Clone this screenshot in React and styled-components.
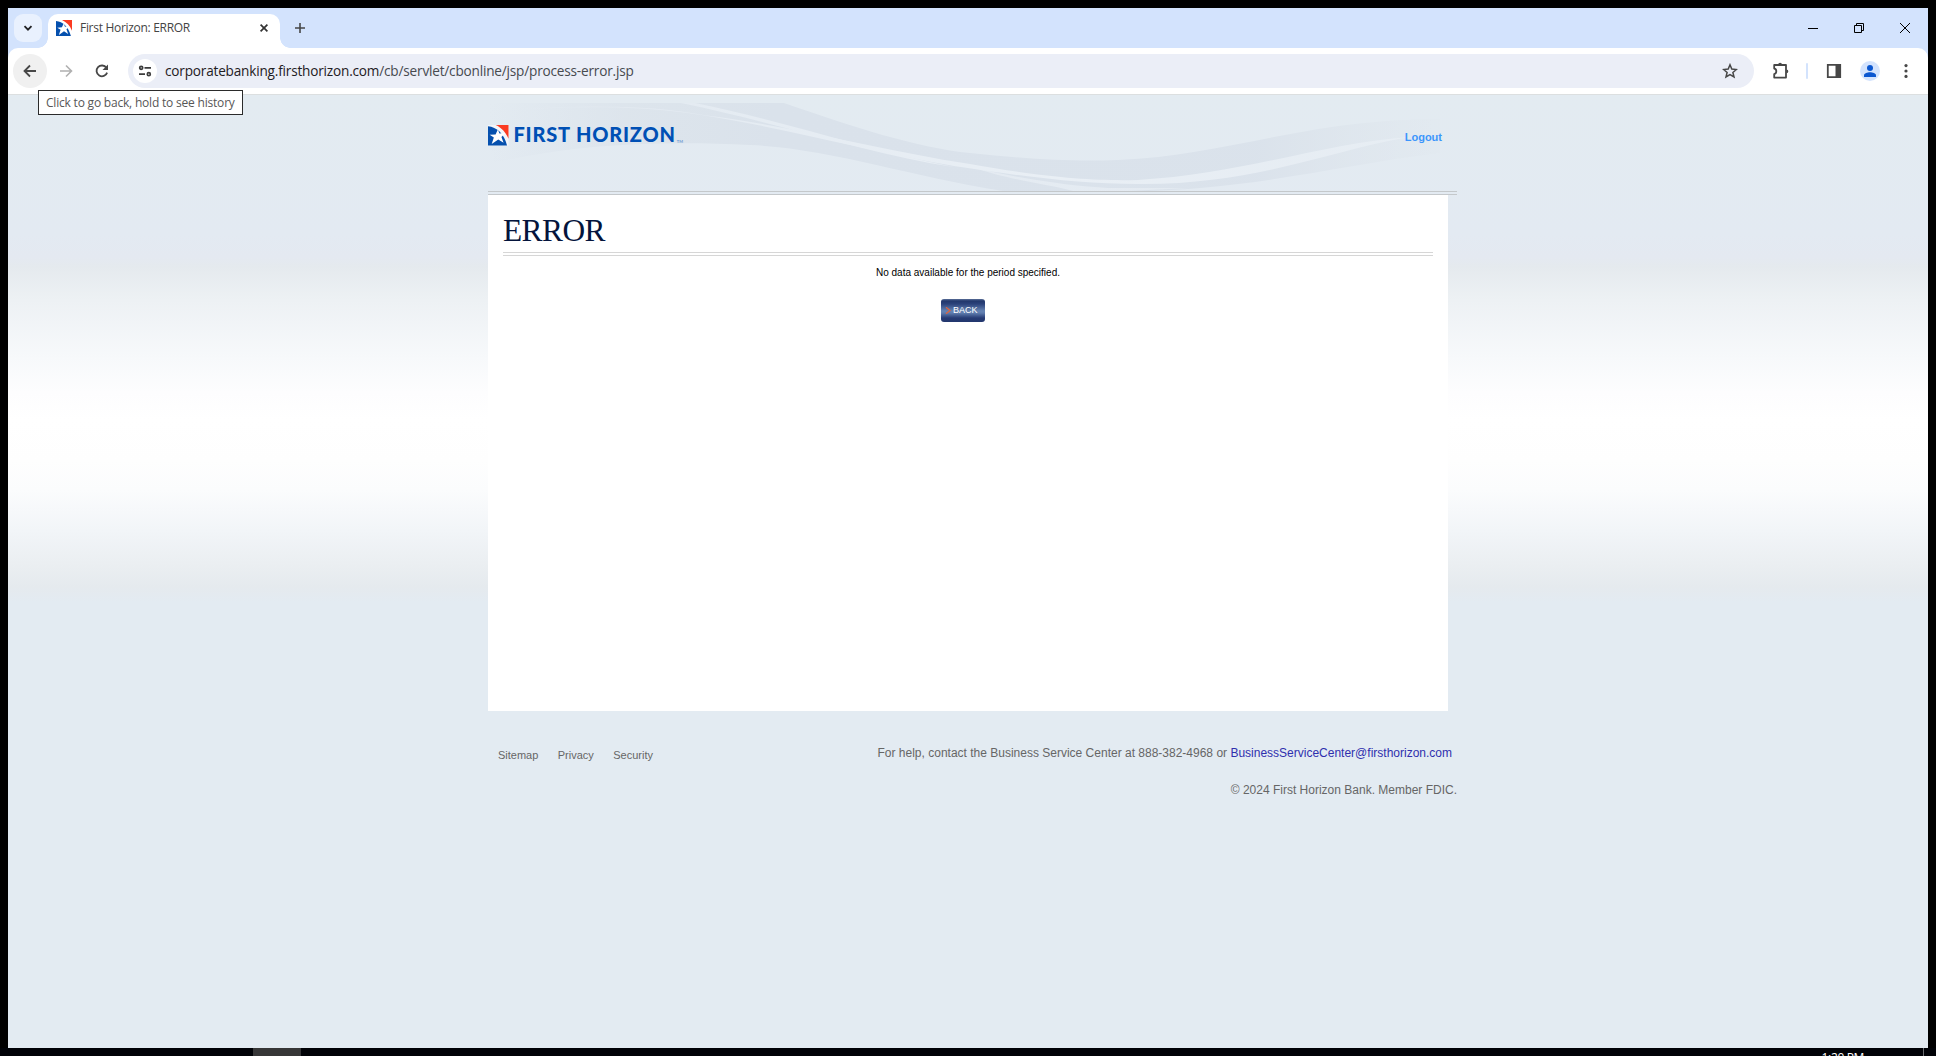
import React from "react";
import styled, { createGlobalStyle } from "styled-components";

const GlobalStyle = createGlobalStyle`
  * { box-sizing: border-box; }
  html, body { margin: 0; padding: 0; background: #000; }
  body { width: 1936px; height: 1056px; overflow: hidden; font-family: "Liberation Sans", Arial, sans-serif; }
  a { text-decoration: none; color: inherit; }
  svg { display: block; flex: none; }
`;

const uiFont = `"Open Sans", "Noto Sans", sans-serif`;

const Screen = styled.div`
  display: flex;
  flex-direction: column;
  width: 1936px;
  height: 1056px;
  padding: 8px 8px 0;
  background: #000;
  overflow: hidden;
`;

const Window = styled.div`
  display: flex;
  flex-direction: column;
  width: 1920px;
  height: 1040px;
  flex: none;
  background: #d3e3fd;
`;

const TabStrip = styled.div`
  display: flex;
  align-items: flex-start;
  height: 40px;
  padding: 6px 0 0 6px;
`;

const TabSearch = styled.button`
  display: flex;
  align-items: center;
  justify-content: center;
  width: 28px;
  height: 28px;
  padding: 0;
  border: 0;
  border-radius: 9px;
  background: #e9f1fe;
`;

const Tab = styled.div`
  position: relative;
  display: flex;
  align-items: center;
  width: 232px;
  height: 34px;
  margin-left: 6px;
  padding: 0 10px 6px 8px;
  border-radius: 10px 10px 0 0;
  background: #fff;
  &::before, &::after {
    content: "";
    position: absolute;
    bottom: 0;
    width: 10px;
    height: 10px;
  }
  &::before {
    left: -10px;
    background: radial-gradient(circle at 0 0, transparent 9.5px, #fff 10px);
  }
  &::after {
    right: -10px;
    background: radial-gradient(circle at 100% 0, transparent 9.5px, #fff 10px);
  }
`;

const TabTitle = styled.span`
  flex: 1;
  margin-left: 8px;
  font: 12px/16px ${uiFont};
  letter-spacing: -0.3px;
  color: #444;
  white-space: nowrap;
`;

const NewTab = styled.div`
  display: flex;
  align-items: center;
  justify-content: center;
  width: 28px;
  height: 28px;
  margin-left: 6px;
`;

const WindowControls = styled.div`
  display: flex;
  margin-left: auto;
`;

const WindowButton = styled.div`
  display: flex;
  align-items: center;
  justify-content: center;
  width: 46px;
  height: 28px;
`;

const Toolbar = styled.div`
  display: flex;
  align-items: center;
  height: 47px;
  flex: none;
  padding: 0 4px 1px 5px;
  border-bottom: 1px solid #dcdfe0;
  border-radius: 10px 10px 0 0;
  background: #fff;
`;

const NavButton = styled.div`
  position: relative;
  display: flex;
  align-items: center;
  justify-content: center;
  width: 34px;
  height: 34px;
  margin-right: 2px;
  border-radius: 50%;
  background: ${(p) => (p.$active ? "#f0f0f0" : "transparent")};
`;

const Tooltip = styled.div`
  position: absolute;
  z-index: 2;
  left: 25px;
  top: 36px;
  width: 205px;
  height: 25px;
  padding-left: 7px;
  border: 1px solid #2b2b2b;
  background: #fff;
  color: #575757;
  font: 12px/23px ${uiFont};
  letter-spacing: -0.2px;
  white-space: nowrap;
`;

const Omnibox = styled.div`
  display: flex;
  align-items: center;
  flex: 1;
  height: 34px;
  margin: 0 8px 0 7px;
  padding: 0 16px 0 5px;
  border-radius: 17px;
  background: #ebeef7;
`;

const SiteChip = styled.div`
  display: flex;
  align-items: center;
  justify-content: center;
  width: 24px;
  height: 24px;
  border-radius: 50%;
  background: #fff;
`;

const Url = styled.div`
  flex: 1;
  margin-left: 8px;
  font: 13.6px/20px ${uiFont};
  letter-spacing: -0.19px;
  color: #474a4f;
  white-space: nowrap;
`;

const Host = styled.span`
  color: #1f2023;
`;

const ToolbarItem = styled.div`
  display: flex;
  align-items: center;
  justify-content: center;
  width: 36px;
  height: 34px;
`;

const Separator = styled.div`
  width: 2px;
  height: 16px;
  margin: 0 8px;
  border-radius: 1px;
  background: #d3e3fd;
`;

const Avatar = styled.div`
  display: flex;
  align-items: center;
  justify-content: center;
  width: 20px;
  height: 20px;
  border-radius: 50%;
  background: #d3e3fd;
`;

const Page = styled.div`
  flex: 1;
  padding-left: 480px;
  background: linear-gradient(
    #e3ebf1 0, #e3eaf2 140px, #e4e9f1 162px, #e5eaee 172px, #edf1f4 205px,
    #f7f9fb 263px, #fdfdfe 297px, #fff 325px, #fefefe 365px, #fbfcfd 395px,
    #f2f5f8 435px, #eaeef1 472px, #e5eaee 492px, #e3ebf2 507px, #e3ebf2 100%
  );
`;

const Header = styled.header`
  position: relative;
  display: flex;
  justify-content: space-between;
  width: 969px;
  height: 100px;
  padding: 30px 15px 0 0;
  border-bottom: 4px double #c4c8cb;
`;

const Waves = styled.svg`
  position: absolute;
  left: 0;
  top: 8px;
`;

const Brand = styled.div`
  position: relative;
  display: flex;
  height: 20px;
`;

const BrandName = styled.span`
  margin-left: 5px;
  font: 900 20px/19px Lato, sans-serif;
  letter-spacing: 0.8px;
  color: #0050b5;
  white-space: nowrap;
`;

const Mark = styled.span`
  align-self: flex-end;
  margin: 0 0 1px 1px;
  font: 700 4px/5px Lato, sans-serif;
  color: #6f9bd2;
`;

const Logout = styled.a`
  position: relative;
  margin-top: 6px;
  font: bold 11px/13px "Liberation Sans", Arial, sans-serif;
  color: #3c96fc;
`;

const Panel = styled.main`
  width: 960px;
  height: 516px;
  padding: 0 15px;
  background: #fff;
`;

const Title = styled.h1`
  margin: 0;
  height: 61px;
  padding-top: 18px;
  border-bottom: 4px double #d6d6d6;
  font: 400 31.4px/36px "Liberation Serif", serif;
  letter-spacing: -0.55px;
  color: #04143c;
`;

const Message = styled.p`
  margin: 11px 0 20px;
  font: 10px/12px "Liberation Sans", Arial, sans-serif;
  text-align: center;
  color: #000;
`;

const Actions = styled.div`
  display: flex;
  justify-content: center;
  padding-right: 10px;
`;

const BackButton = styled.button`
  display: flex;
  align-items: center;
  gap: 1px;
  width: 44px;
  height: 23px;
  padding: 0 0 0 4px;
  border: 0;
  border-radius: 3px;
  background: linear-gradient(#5b7099 0, #22376c 2px, #2b427a 5px, #6684b4 12px, #5f7cae 14px, #263b74 19px, #22366d 23px);
  font: 9px/23px "Liberation Sans", Arial, sans-serif;
  color: #fff;
`;

const Footer = styled.footer`
  display: flex;
  justify-content: space-between;
  width: 969px;
  padding: 35px 0 0 10px;
  color: #666;
`;

const FooterLinks = styled.nav`
  display: flex;
  gap: 19.4px;
  padding-top: 3px;
  font-size: 11px;
  line-height: 13px;
`;

const Contact = styled.div`
  display: flex;
  flex-direction: column;
  align-items: flex-end;
  gap: 23px;
  font-size: 12px;
  line-height: 14px;
`;

const HelpLine = styled.div`
  padding-right: 5px;
`;

const MailLink = styled.a`
  && { color: #2f2fae; }
`;

const Taskbar = styled.div`
  display: flex;
  height: 8px;
  flex: none;
  margin: 0 -8px;
  background: #000207;
  overflow: hidden;
`;

const RunningApp = styled.div`
  width: 48px;
  height: 8px;
  margin-left: 253px;
  background: #363637;
`;

const Clock = styled.div`
  height: 8px;
  margin: 4px 59px 0 auto;
  font: 12px/12px ${uiFont};
  letter-spacing: -0.35px;
  color: #fff;
  white-space: nowrap;
`;

const DesktopEdge = styled.div`
  width: 1px;
  margin-right: 12px;
  background: #6a6c70;
`;

const Emblem = ({ size, light }) => (
  <svg width={size} height={size} viewBox="0 0 20 20">
    <rect width="20" height="20" fill={light} />
    <path d="M0 1.2C8.5 2 15.5 8 18.6 20H0Z" fill="#0550ae" />
    <path d="M7.5 0H20V13.5C17.6 7.4 13.3 2.6 7.5 0Z" fill="#fb3b22" />
    <path d="M9.6 4.4L11.2 8.4L17 7.8L13.1 11.6L15.2 17.4L10 14.2L3.6 18.6L5.7 12.3L1.6 9.6L7.4 9.2Z" fill="#fff" />
  </svg>
);

const WaveArt = () => (
  <Waves width="960" height="88" viewBox="0 0 960 88">
    <defs>
      <linearGradient id="fade" x1="0" x2="960" y1="0" y2="0" gradientUnits="userSpaceOnUse">
        <stop offset="0" stopColor="#d9e1eb" stopOpacity="0" />
        <stop offset="0.15" stopColor="#dae2ea" stopOpacity="0.7" />
        <stop offset="0.3" stopColor="#dae2eb" />
        <stop offset="0.8" stopColor="#dae2eb" stopOpacity="0.95" />
        <stop offset="1" stopColor="#dde4eb" stopOpacity="0.1" />
      </linearGradient>
      <linearGradient id="streak" x1="0" x2="960" y1="0" y2="0" gradientUnits="userSpaceOnUse">
        <stop offset="0" stopColor="#e5ebf2" stopOpacity="0" />
        <stop offset="0.2" stopColor="#e4ebf2" />
        <stop offset="0.6" stopColor="#e9eff5" />
        <stop offset="1" stopColor="#e9eff5" stopOpacity="0.7" />
      </linearGradient>
    </defs>
    <path d="M0 0H296C365 24 430 45 482 50C540 56 585 59 630 57C740 52 820 16 952 16V50C850 62 760 88 640 88H515C420 73 340 45 262 42C180 38 90 40 5 60Z" fill="url(#fade)" />
    <g fill="url(#streak)">
      <path d="M207 0C300 19 375 46 466 64C380 51 295 21 193 0Z" />
      <path d="M0 8C100 1 160 2 215 12C310 24 390 47 482 61C560 75 605 78 650 77C755 71 840 39 922 34C845 46 770 82 650 81C590 81 540 74 466 63C370 46 280 21 200 10C130 1 60 4 0 9Z" />
      <path d="M485 64C535 77 585 83 620 85L700 85L640 88L585 88C560 81 515 76 485 64Z" opacity="0.7" />
    </g>
  </Waves>
);

const Stroke = ({ size = 16, color = "#474747", width = 1.8, children }) => (
  <svg width={size} height={size} viewBox={`0 0 ${size} ${size}`} fill="none" stroke={color} strokeWidth={width}>
    {children}
  </svg>
);

const Browser = () => (
  <>
    <TabStrip>
      <TabSearch aria-label="Search tabs">
        <Stroke size={10} color="#202124"><path d="M1.5 3.2L5 6.7L8.5 3.2" /></Stroke>
      </TabSearch>
      <Tab>
        <Emblem size={16} light="#fff" />
        <TabTitle>First Horizon: ERROR</TabTitle>
        <Stroke size={12} color="#333" width={1.7}><path d="M2.6 2.6L9.4 9.4M9.4 2.6L2.6 9.4" /></Stroke>
      </Tab>
      <NewTab>
        <Stroke size={12} width={1.6}><path d="M6 1V11M1 6H11" /></Stroke>
      </NewTab>
      <WindowControls>
        <WindowButton>
          <Stroke size={10} color="#000" width={1}><path d="M0 5.5H10" /></Stroke>
        </WindowButton>
        <WindowButton>
          <Stroke size={10} color="#000" width={1}>
            <path d="M.5 2.5H7.5V9.5H.5ZM2.5 2.5V.5H9.5V7.5H7.5" />
          </Stroke>
        </WindowButton>
        <WindowButton>
          <Stroke size={10} color="#000" width={1}><path d="M0 0L10 10M10 0L0 10" /></Stroke>
        </WindowButton>
      </WindowControls>
    </TabStrip>
    <Toolbar>
      <NavButton $active>
        <Stroke><path d="M14 8H3M8 2.5L2.5 8L8 13.5" /></Stroke>
        <Tooltip>Click to go back, hold to see history</Tooltip>
      </NavButton>
      <NavButton>
        <Stroke color="#b0b0b0" width={1.6}><path d="M2 8H13M8 2.5L13.5 8L8 13.5" /></Stroke>
      </NavButton>
      <NavButton>
        <Stroke>
          <path d="M13.1 9.6A5.4 5.4 0 1 1 12.4 4.8" />
          <path d="M14 1.5V7H8.5Z" fill="#474747" stroke="none" />
        </Stroke>
      </NavButton>
      <Omnibox>
        <SiteChip>
          <Stroke color="#3c3c3c" width={1.7}>
            <circle cx="4.2" cy="4.8" r="1.5" /><path d="M7.5 4.8H14M2 11.2H8" />
            <circle cx="11.8" cy="11.2" r="1.5" />
          </Stroke>
        </SiteChip>
        <Url><Host>corporatebanking.firsthorizon.com</Host>/cb/servlet/cbonline/jsp/process-error.jsp</Url>
        <Stroke width={1.5}>
          <path d="M8 1.8L9.8 6.1L14.4 6.5L10.9 9.5L12 14L8 11.6L4 14L5.1 9.5L1.6 6.5L6.2 6.1Z" />
        </Stroke>
      </Omnibox>
      <ToolbarItem>
        <Stroke size={18} width={1.8}>
          <path d="M3.2 3H15V15.6H3.2V12.1C6 11.4 6 7.1 3.2 6.5Z" strokeLinejoin="round" />
          <path d="M7.2 2.6A1.9 1.9 0 0 1 11 2.6ZM15.4 7.4A1.9 1.9 0 0 1 15.4 11.2Z" fill="#474747" stroke="none" />
        </Stroke>
      </ToolbarItem>
      <Separator />
      <ToolbarItem>
        <Stroke><path d="M1.8 1.8H14.2V14.2H1.8Z" /><path d="M9.5 2H14V14H9.5Z" fill="#474747" stroke="none" /></Stroke>
      </ToolbarItem>
      <ToolbarItem>
        <Avatar>
          <svg width="14" height="14" viewBox="0 0 14 14" fill="#0b57d0">
            <circle cx="7" cy="4" r="3" /><path d="M1 13V11.3C1 9.4 4.5 8.3 7 8.3S13 9.4 13 11.3V13Z" />
          </svg>
        </Avatar>
      </ToolbarItem>
      <ToolbarItem>
        <svg width="16" height="16" viewBox="0 0 16 16" fill="#474747">
          <circle cx="8" cy="2.6" r="1.6" /><circle cx="8" cy="8" r="1.6" /><circle cx="8" cy="13.4" r="1.6" />
        </svg>
      </ToolbarItem>
    </Toolbar>
  </>
);

export default function App() {
  return (
    <Screen>
      <GlobalStyle />
      <Window>
        <Browser />
        <Page>
          <Header>
            <WaveArt />
            <Brand>
              <Emblem size={20.5} light="#f3f6fa" />
              <BrandName>FIRST HORIZON</BrandName>
              <Mark>TM</Mark>
            </Brand>
            <Logout href="#">Logout</Logout>
          </Header>
          <Panel>
            <Title>ERROR</Title>
            <Message>No data available for the period specified.</Message>
            <Actions>
              <BackButton>
                <Stroke size={7} color="#e0633c" width={1.3}><path d="M1 0.3L5 3.5L1 6.7" /></Stroke>
                BACK
              </BackButton>
            </Actions>
          </Panel>
          <Footer>
            <FooterLinks>
              <a href="#">Sitemap</a>
              <a href="#">Privacy</a>
              <a href="#">Security</a>
            </FooterLinks>
            <Contact>
              <HelpLine>
                For help, contact the Business Service Center at 888-382-4968 or{" "}
                <MailLink href="#">BusinessServiceCenter@firsthorizon.com</MailLink>
              </HelpLine>
              <div>© 2024 First Horizon Bank. Member FDIC.</div>
            </Contact>
          </Footer>
        </Page>
      </Window>
      <Taskbar>
        <RunningApp />
        <Clock>1:20 PM</Clock>
        <DesktopEdge />
      </Taskbar>
    </Screen>
  );
}
